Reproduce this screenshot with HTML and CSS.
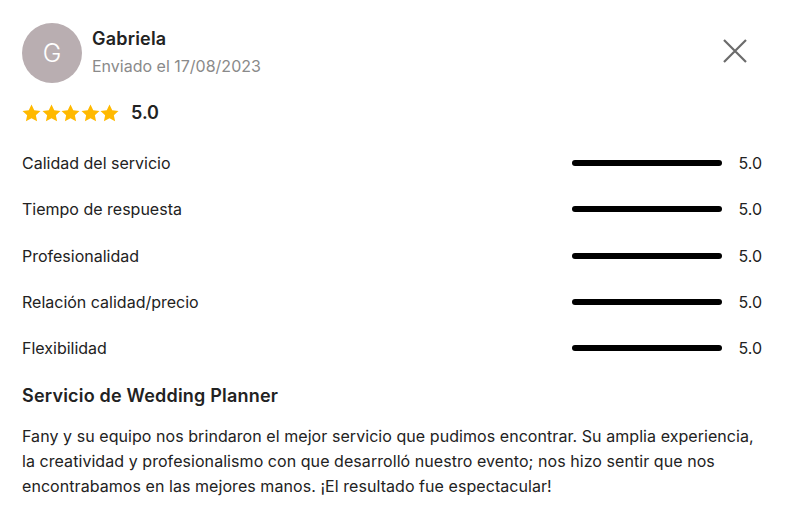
FILE: index.html
```html
<!DOCTYPE html>
<html lang="es">
<head>
<meta charset="utf-8">
<link rel="stylesheet" href="styles.css">
</head>
<body>
<div class="review">
  <div class="header">
    <div class="avatar">G</div>
    <div class="who">
      <div class="name">Gabriela</div>
      <div class="date">Enviado el 17/08/2023</div>
    </div>
    <button class="close" aria-label="Cerrar">
      <svg width="24" height="24" viewBox="0 0 24 24"><path d="M1 1L23 23M23 1L1 23" stroke="#6b6b6b" stroke-width="2.2" fill="none"/></svg>
    </button>
  </div>
  <div class="overall">
    <div class="stars">
      <svg viewBox="0 0 20 19"><path d="M10 0.5l2.9 6 6.6 0.8-4.9 4.5 1.3 6.5L10 15.1l-5.9 3.2 1.3-6.5L0.5 7.3l6.6-0.8z" fill="#ffb900"/></svg>
      <svg viewBox="0 0 20 19"><path d="M10 0.5l2.9 6 6.6 0.8-4.9 4.5 1.3 6.5L10 15.1l-5.9 3.2 1.3-6.5L0.5 7.3l6.6-0.8z" fill="#ffb900"/></svg>
      <svg viewBox="0 0 20 19"><path d="M10 0.5l2.9 6 6.6 0.8-4.9 4.5 1.3 6.5L10 15.1l-5.9 3.2 1.3-6.5L0.5 7.3l6.6-0.8z" fill="#ffb900"/></svg>
      <svg viewBox="0 0 20 19"><path d="M10 0.5l2.9 6 6.6 0.8-4.9 4.5 1.3 6.5L10 15.1l-5.9 3.2 1.3-6.5L0.5 7.3l6.6-0.8z" fill="#ffb900"/></svg>
      <svg viewBox="0 0 20 19"><path d="M10 0.5l2.9 6 6.6 0.8-4.9 4.5 1.3 6.5L10 15.1l-5.9 3.2 1.3-6.5L0.5 7.3l6.6-0.8z" fill="#ffb900"/></svg>
    </div>
    <span class="score">5.0</span>
  </div>
  <ul class="ratings">
    <li><span class="label">Calidad del servicio</span><span class="bar"></span><span class="val">5.0</span></li>
    <li><span class="label">Tiempo de respuesta</span><span class="bar"></span><span class="val">5.0</span></li>
    <li><span class="label">Profesionalidad</span><span class="bar"></span><span class="val">5.0</span></li>
    <li><span class="label">Relación calidad/precio</span><span class="bar"></span><span class="val">5.0</span></li>
    <li><span class="label">Flexibilidad</span><span class="bar"></span><span class="val">5.0</span></li>
  </ul>
  <h2 class="title">Servicio de Wedding Planner</h2>
  <p class="text">Fany y su equipo nos brindaron el mejor servicio que pudimos encontrar. Su amplia experiencia, la creatividad y profesionalismo con que desarrolló nuestro evento; nos hizo sentir que nos encontrabamos en las mejores manos. ¡El resultado fue espectacular!</p>
</div>
</body>
</html>
```
FILE: styles.css
```css
* { box-sizing: border-box; }
html, body { margin: 0; padding: 0; background: #fff; }
body {
  font-family: Inter, "Open Sans", sans-serif;
  color: #222;
  font-size: 16px;
}
.review {
  padding: 23px 24px 0 22px;
}
.header {
  display: flex;
  align-items: flex-start;
  gap: 10px;
}
.avatar {
  width: 60px;
  height: 60px;
  border-radius: 50%;
  background: #b9aeb1;
  color: #fff;
  font-size: 25px;
  font-weight: 300;
  display: flex;
  align-items: center;
  justify-content: center;
  flex-shrink: 0;
}
.who { flex: 1; padding-top: 5px; }
.name { font-size: 18px; font-weight: 600; letter-spacing: 0.2px; line-height: 22px; color: #222; }
.date { font-size: 16px; color: #8a8a8a; margin-top: 6px; line-height: 20px; }
.close {
  border: 0;
  background: none;
  padding: 0;
  margin: 16px 15px 0 0;
  width: 24px;
  height: 24px;
  cursor: pointer;
}
.close svg { display: block; }
.overall {
  display: flex;
  align-items: center;
  margin-top: 19px;
  gap: 12px;
}
.stars { display: flex; gap: 0.5px; }
.stars svg { width: 19px; height: 18px; display: block; }
.score { font-size: 18px; font-weight: 600; line-height: 22px; }
.ratings {
  list-style: none;
  margin: 16px 0 0;
  padding: 0;
}
.ratings li {
  display: flex;
  align-items: center;
  height: 46.3px;
}
.label { flex: 1; font-size: 16px; }
.bar {
  width: 150px;
  height: 6px;
  border-radius: 3px;
  background: #000;
  margin-left: 1px;
}
.val { width: 40px; text-align: right; font-size: 16px; }
.title {
  font-size: 18px;
  font-weight: 600;
  letter-spacing: 0.2px;
  margin: 13px 0 0;
  line-height: 24px;
}
.text {
  margin: 16px 0 0;
  line-height: 25px;
  font-size: 16px;
  letter-spacing: 0.06px;
}
```
